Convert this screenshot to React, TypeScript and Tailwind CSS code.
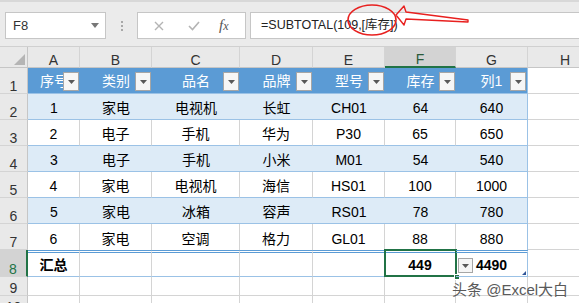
// Excel sheet: structured table with a SUBTOTAL total row and an annotated formula bar.
const FONT = { fontFamily: '"Liberation Sans", "Noto Sans CJK SC", sans-serif' };

const COLS = ["w-[52px]", "w-[72px]", "w-[88px]", "w-[73px]", "w-[72px]", "w-[71px]", "w-[72px]"];
const LETTERS = ["A", "B", "C", "D", "E", "F", "G"];
const HEADERS = ["序号", "类别", "品名", "品牌", "型号", "库存", "列1"];
const ROWS = [
  ["1", "家电", "电视机", "长虹", "CH01", "64", "640"],
  ["2", "电子", "手机", "华为", "P30", "65", "650"],
  ["3", "电子", "手机", "小米", "M01", "54", "540"],
  ["4", "家电", "电视机", "海信", "HS01", "100", "1000"],
  ["5", "家电", "冰箱", "容声", "RS01", "78", "780"],
  ["6", "家电", "空调", "格力", "GL01", "88", "880"],
];

function DropButton({ className }: { className: string }) {
  return (
    <div className={`absolute flex items-center justify-center border border-[#a6a6a6] bg-[#f6f6f6] ${className}`}>
      <svg width="7" height="4" viewBox="0 0 7 4">
        <polygon points="0,0 7,0 3.5,4" fill="#595959" />
      </svg>
    </div>
  );
}

function RowHead({ n, h, active }: { n: string; h: string; active?: boolean }) {
  return (
    <div
      className={`flex w-[28px] shrink-0 items-end justify-center border-b border-[#d4d4d4] text-[14px] leading-[14px] ${h} ${
        active ? "border-r-2 border-r-[#217346] bg-[#d3d3d3] text-[#217346]" : "border-r border-r-[#c6c6c6] bg-[#e9e9e9] text-[#333]"
      }`}
    >
      {n}
    </div>
  );
}

export default function App() {
  return (
    <div className="relative h-[303px] w-[579px] overflow-hidden bg-white" style={FONT}>
      {/* ribbon strip + name box + formula bar */}
      <div className="flex h-[47px] items-start border-t-[2px] border-b border-t-[#d8d8d8] border-b-[#d0d0d0] bg-[#ebebeb] pt-[10px]">
        <div className="ml-[5px] flex h-[27px] w-[101px] items-center justify-between border border-[#c6c6c6] bg-white pl-[7px] pr-[6px]">
          <span className="text-[13px] text-[#333]">F8</span>
          <svg width="8" height="5" viewBox="0 0 8 5">
            <polygon points="0,0 8,0 4,5" fill="#777" />
          </svg>
        </div>
        <div className="flex h-[27px] w-[31px] flex-col items-center justify-center gap-[2px]">
          <span className="h-[2px] w-[2px] bg-[#a8a8a8]" />
          <span className="h-[2px] w-[2px] bg-[#a8a8a8]" />
          <span className="h-[2px] w-[2px] bg-[#a8a8a8]" />
        </div>
        <div className="flex h-[27px] w-[109px] items-center border border-[#c6c6c6] bg-white">
          <svg className="ml-[16px]" width="10" height="10" viewBox="0 0 10 10">
            <path d="M1 1 L9 9 M9 1 L1 9" stroke="#b4b4b4" strokeWidth="1.4" />
          </svg>
          <svg className="ml-[24px]" width="12" height="10" viewBox="0 0 12 10">
            <path d="M1 5 L4.5 8.5 L11 1" stroke="#b4b4b4" strokeWidth="1.6" fill="none" />
          </svg>
          <span className="ml-[19px] text-[15px] italic text-[#555]" style={{ fontFamily: '"Liberation Serif", serif' }}>
            f<span className="text-[12px]">x</span>
          </span>
        </div>
        <div className="ml-[4px] mr-[-4px] flex h-[27px] flex-1 items-center border border-[#c6c6c6] bg-white pl-[10px] text-[12.5px] text-[#222]">
          =SUBTOTAL(109,[库存])
        </div>
      </div>

      {/* column letters */}
      <div className="flex h-[21px]">
        <div className="relative w-[28px] shrink-0 border-r border-b border-[#c6c6c6] bg-[#e9e9e9]">
          <svg className="absolute right-[2px] bottom-[2px]" width="11" height="11" viewBox="0 0 11 11">
            <polygon points="11,0 11,11 0,11" fill="#b5b5b5" />
          </svg>
        </div>
        {LETTERS.map((l, i) => (
          <div
            key={l}
            className={`flex shrink-0 items-end justify-center border-r border-[#d4d4d4] text-[14px] leading-[14px] ${COLS[i]} ${
              l === "F" ? "border-b-2 border-b-[#217346] bg-[#d3d3d3] text-[#2a5a3a]" : "border-b border-b-[#c6c6c6] bg-[#e9e9e9] text-[#333]"
            }`}
          >
            {l}
          </div>
        ))}
        <div className="flex flex-1 items-end border-b border-[#c6c6c6] bg-[#e9e9e9] pl-[32px] text-[14px] leading-[14px] text-[#333]">
          H
        </div>
      </div>

      {/* header row 1 */}
      <div className="flex h-[26px] text-[14px]">
        <RowHead n="1" h="h-[26px]" />
        {HEADERS.map((t, i) => (
          <div
            key={t}
            className={`relative flex shrink-0 items-end justify-center border-b border-[#9bc2e6] bg-[#5b9bd5] pb-[3px] leading-[18px] text-white ${COLS[i]} ${
              i === 6 ? "border-r border-r-[#9bc2e6]" : ""
            }`}
          >
            {t}
            <DropButton className="right-[1px] bottom-[2px] h-[19px] w-[16px]" />
          </div>
        ))}
        <div className="flex-1 border-b border-[#d4d4d4]" />
      </div>

      {/* data rows */}
      {ROWS.map((r, ri) => {
        const band = ri % 2 === 0;
        return (
          <div key={ri} className="flex h-[26px] text-[14px]">
            <RowHead n={String(ri + 2)} h="h-[26px]" />
            {r.map((v, ci) => (
              <div
                key={ci}
                className={`flex shrink-0 items-end justify-center pb-[2px] leading-[18px] text-black ${COLS[ci]} ${
                  ri === 5 ? "" : "border-b border-[#9bc2e6]"
                } ${band ? "bg-[#ddebf7]" : ""} ${
                  ci === 6 ? "border-r border-r-[#9bc2e6]" : band ? "" : "border-r border-r-[#d4d4d4]"
                }`}
              >
                {v}
              </div>
            ))}
            <div className="flex-1 border-b border-[#d4d4d4]" />
          </div>
        );
      })}

      {/* total row 8 */}
      <div className="flex h-[27px] text-[14px] font-bold">
        <RowHead n="8" h="h-[27px] font-normal" active />
        {COLS.map((c, ci) => (
          <div
            key={ci}
            className={`relative flex shrink-0 items-end justify-center border-t-[3px] border-b border-double border-t-[#5b9bd5] border-b-[#9bc2e6] pb-[2px] leading-[18px] text-black ${c} ${
              ci === 6 ? "border-r border-r-[#9bc2e6]" : "border-r border-r-[#d4d4d4]"
            }`}
            style={{ borderBottomStyle: "solid", borderRightStyle: "solid" }}
          >
            {ci === 0 ? "汇总" : ci === 5 ? "449" : ci === 6 ? "4490" : ""}
            {ci === 5 && (
              <>
                <div className="absolute top-[-4px] right-[-2px] bottom-[-1px] left-[-1px] border-2 border-[#217346]" />
                <div className="absolute right-[-5px] bottom-[-4px] h-[6px] w-[6px] border border-white bg-[#217346]" />
              </>
            )}
            {ci === 6 && (
              <>
                <DropButton className="left-[2px] bottom-[3px] h-[15px] w-[15px]" />
                <svg className="absolute right-[1px] bottom-[1px]" width="4" height="4" viewBox="0 0 4 4">
                  <polygon points="4,0 4,4 0,4" fill="#2f5597" />
                </svg>
              </>
            )}
          </div>
        ))}
        <div className="flex-1 border-b border-[#d4d4d4]" />
      </div>

      {/* empty rows */}
      {["9", "10"].map((n) => (
        <div key={n} className="flex h-[19px]">
          <RowHead n={n} h="h-[19px]" />
          {COLS.map((c, ci) => (
            <div key={ci} className={`shrink-0 border-r border-b border-[#d4d4d4] ${c}`} />
          ))}
          <div className="flex-1 border-b border-[#d4d4d4]" />
        </div>
      ))}

      {/* red annotation on the formula bar */}
      <svg className="pointer-events-none absolute top-0 left-0" width="579" height="50" viewBox="0 0 579 50">
        <ellipse cx="372" cy="20" rx="24" ry="15" fill="none" stroke="#e8201f" strokeWidth="1.6" />
        <path
          d="M396 15 L404 6 L406 12 L468 20 L468 22 L406 19 L404 25 Z"
          fill="none"
          stroke="#e8201f"
          strokeWidth="1.4"
          strokeLinejoin="round"
        />
      </svg>

      {/* watermark */}
      <div className="absolute top-[281px] left-[452px] text-[15px] leading-[18px] text-[#5a5a5a]">头条 @Excel大白</div>
    </div>
  );
}
